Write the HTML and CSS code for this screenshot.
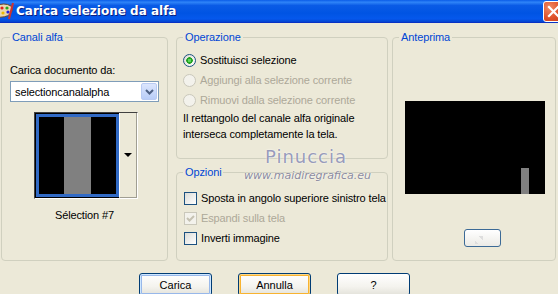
FILE: index.html
```html
<!DOCTYPE html>
<html lang="it">

<head>
    <meta charset="UTF-8">
    <title>Carica selezione da alfa</title>
    <link rel="stylesheet" href="styles.css">
</head>

<body>
    <div class="window">
        <div class="titlebar">
            <svg class="appIcon" width="14" height="18" viewBox="0 0 14 18">
                <path d="M-4 4 Q4 0 11 4 Q14 8 10 12 Q6 16 -4 15 Z" fill="#e9d7b0" stroke="#6b4a2a" stroke-width="1"/>
                <circle cx="2" cy="6" r="1.6" fill="#d22"/>
                <circle cx="7" cy="6" r="1.6" fill="#2a2"/>
                <circle cx="8" cy="10" r="1.6" fill="#22d"/>
                <circle cx="3" cy="11" r="1.6" fill="#eb0"/>
                <path d="M9 17 L13 1" stroke="#c33" stroke-width="2"/>
            </svg>
            <span class="title">Carica selezione da alfa</span>
            <span class="closeBtn">
                <svg width="21" height="21" viewBox="0 0 21 21">
                    <path d="M6 6 L15 15 M15 6 L6 15" stroke="#fff" stroke-width="2.2" stroke-linecap="square"/>
                </svg>
            </span>
        </div>

        <div class="dialog">
            <div class="groups">
                <fieldset class="group channels">
                    <legend>Canali alfa</legend>
                    <div class="fieldLabel">Carica documento da:</div>
                    <div class="combo">
                        <span class="comboText">selectioncanalalpha</span>
                        <span class="comboBtn">
                            <svg width="9" height="6" viewBox="0 0 9 6">
                                <path d="M1 1 L4.5 4.5 L8 1" stroke="#4d6185" stroke-width="2" fill="none"/>
                            </svg>
                        </span>
                    </div>
                    <div class="thumbPicker">
                        <div class="thumb"><div class="thumbImage"></div></div>
                        <div class="thumbDrop"><span class="arrowDown"></span></div>
                    </div>
                    <div class="thumbCaption">Sélection #7</div>
                </fieldset>

                <div class="middle">
                    <fieldset class="group operation">
                        <legend>Operazione</legend>
                        <div class="option"><span class="radio checked"></span>Sostituisci selezione</div>
                        <div class="option disabled"><span class="radio"></span>Aggiungi alla selezione corrente</div>
                        <div class="option disabled"><span class="radio"></span>Rimuovi dalla selezione corrente</div>
                        <p class="note">Il rettangolo del canale alfa originale<br>interseca completamente la tela.</p>
                    </fieldset>
                    <fieldset class="group options">
                        <legend>Opzioni</legend>
                        <div class="option"><span class="check"></span>Sposta in angolo superiore sinistro tela</div>
                        <div class="option disabled"><span class="check">
                            <svg width="11" height="11" viewBox="0 0 11 11">
                                <path d="M2 5 L4.5 7.5 L9 3" stroke="#c5c2b2" stroke-width="2" fill="none"/>
                            </svg>
                        </span>Espandi sulla tela</div>
                        <div class="option"><span class="check"></span>Inverti immagine</div>
                    </fieldset>
                </div>

                <fieldset class="group preview">
                    <legend>Anteprima</legend>
                    <div class="previewImage"><span class="previewBar"></span></div>
                    <button class="previewBtn"></button>
                </fieldset>
            </div>

            <div class="actions">
                <button class="btn default">Carica</button>
                <button class="btn hover">Annulla</button>
                <button class="btn">?</button>
            </div>
        </div>

        <div class="watermark">
            <div class="wmName">Pinuccia</div>
            <div class="wmSite">www.maidiregrafica.eu</div>
        </div>
    </div>
</body>

</html>
```

FILE: styles.css
```css
body {
    margin: 0;
    background-color: #ece9d8;
    font-family: "Liberation Sans", Arial, sans-serif;
    font-size: 11px;
    letter-spacing: -0.12px;
    color: #000;
}

.window {
    position: relative;
    width: 558px;
    height: 294px;
    overflow: hidden;
    background-color: #ece9d8;
}

.titlebar {
    display: flex;
    align-items: center;
    height: 22px;
    border-bottom: 1px solid #0831c4;
    background: linear-gradient(#0a5ce8 0%, #2f84f8 10%, #0a5be6 25%, #0054e3 60%, #0558ec 85%, #0444cf 100%);
}

.appIcon {
    flex: none;
    margin: 0 2px 0 0;
}

.title {
    flex: 1;
    color: #fff;
    font-family: "DejaVu Sans", sans-serif;
    font-weight: bold;
    font-size: 12px;
    letter-spacing: 0;
    text-shadow: 1px 1px 0 #0a1e80;
}

.closeBtn {
    flex: none;
    width: 21px;
    height: 21px;
    margin: 0 -6px 0 0;
    box-sizing: border-box;
    border: 1px solid #fff;
    border-radius: 3px;
    background: radial-gradient(circle at 30% 30%, #f08a66 0%, #e0522a 55%, #c43c1a 100%);
}

.closeBtn svg {
    display: block;
    margin: -1px;
}

.dialog {
    padding: 8px 2px 0 1px;
}

.groups {
    display: flex;
    height: 230px;
}

.group {
    box-sizing: border-box;
    margin: 0;
    min-width: 0;
    padding: 0 6px;
    border: 1px solid #d0d0bf;
    border-radius: 4px;
}

.group legend {
    padding: 0 2px;
    line-height: 13px;
    color: #0046d5;
}

.channels {
    width: 167px;
    padding: 0 8px;
}

.middle {
    display: flex;
    flex-direction: column;
    width: 212px;
    margin-left: 8px;
}

.operation {
    height: 128px;
}

.options {
    flex: 1;
    margin-top: 7px;
}

.preview {
    width: 164px;
    margin-left: 4px;
}

.fieldLabel {
    margin-top: 20px;
    line-height: 13px;
}

.combo {
    display: flex;
    align-items: center;
    box-sizing: border-box;
    width: 149px;
    height: 21px;
    margin-top: 4px;
    border: 1px solid #7f9db9;
    background-color: #fff;
}

.comboText {
    flex: 1;
    padding-left: 4px;
}

.comboBtn {
    display: flex;
    align-items: center;
    justify-content: center;
    box-sizing: border-box;
    width: 16px;
    height: 17px;
    margin-right: 1px;
    border: 1px solid #b9cbf3;
    border-radius: 2px;
    background: linear-gradient(#dce6fd, #b8cdf8);
}

.thumbPicker {
    display: flex;
    box-sizing: border-box;
    width: 104px;
    height: 87px;
    margin: 10px 0 0 24px;
    border: 1px solid;
    border-color: #404040 #fff #fff #404040;
    background-color: #ece9d8;
}

.thumb {
    box-sizing: border-box;
    width: 84px;
    height: 85px;
    border: 1px solid #000;
    border-right: none;
}

.thumbImage {
    height: 100%;
    box-sizing: border-box;
    border: 3px solid #316ac5;
    background: linear-gradient(to right, #000 0 25px, #808080 25px 52px, #000 52px);
}

.thumbDrop {
    display: flex;
    align-items: center;
    justify-content: center;
    flex: 1;
    border-left: 1px solid #fff;
    border-right: 1px solid #a09e92;
    border-bottom: 1px solid #a09e92;
}

.arrowDown {
    border-left: 4px solid transparent;
    border-right: 4px solid transparent;
    border-top: 4px solid #000;
}

.thumbCaption {
    margin-top: 10px;
    text-align: center;
    line-height: 13px;
}

.option {
    display: flex;
    align-items: center;
    height: 20px;
    line-height: 13px;
    white-space: nowrap;
}

.option.disabled {
    color: #aca899;
}

.operation .option:first-of-type {
    margin-top: 6px;
}

.options .option:first-of-type {
    margin-top: 9px;
}

.radio {
    flex: none;
    box-sizing: border-box;
    width: 13px;
    height: 13px;
    margin-right: 4px;
    border: 1px solid #1c5180;
    border-radius: 50%;
    background: linear-gradient(135deg, #dcdbd3, #fff);
}

.radio.checked {
    background: radial-gradient(circle, #5cd65c 0 1.5px, #21a121 2px 3px, transparent 3.5px), linear-gradient(135deg, #dcdbd3, #fff);
}

.disabled .radio {
    border-color: #cac8bb;
    background: #f3f2ec;
}

.check {
    flex: none;
    display: flex;
    align-items: center;
    justify-content: center;
    box-sizing: border-box;
    width: 13px;
    height: 13px;
    margin: 0 4px 0 1px;
    border: 1px solid #1c5180;
    background: linear-gradient(135deg, #dcdcd7, #fff);
}

.disabled .check {
    border-color: #cac8bb;
    background: #f3f2ec;
}

.note {
    margin: 0;
    line-height: 16px;
    white-space: nowrap;
}

.previewImage {
    position: relative;
    width: 140px;
    height: 93px;
    margin: 57px 0 0 6px;
    background-color: #000;
}

.previewBar {
    position: absolute;
    left: 116px;
    bottom: 0;
    width: 8px;
    height: 26px;
    background-color: #808080;
}

.previewBtn {
    display: block;
    width: 37px;
    height: 18px;
    margin: 35px 0 0 65px;
    border: 1px solid #3c6a96;
    border-radius: 3px;
    background:
        linear-gradient(45deg, #dedede 25%, transparent 25% 75%, #dedede 75%) 10px 6px / 8px 8px no-repeat,
        linear-gradient(#fff, #ecebe6);
}

.actions {
    display: flex;
    margin: 12px 0 0 138px;
    gap: 26px;
}

.btn {
    width: 73px;
    height: 23px;
    padding: 0;
    border: 1px solid #003c74;
    border-radius: 3px;
    background: linear-gradient(#fff 0%, #f4f3ee 60%, #e3e2da 100%);
    font-family: "Liberation Sans", Arial, sans-serif;
    font-size: 11px;
    color: #000;
}

.btn.default {
    box-shadow: inset 0 0 0 1px #cee7ff, inset 0 0 0 2px #98b8ea;
}

.btn.hover {
    box-shadow: inset 0 0 0 1px #fdd889, inset 0 0 0 2px #f8b330;
}

.watermark {
    position: absolute;
    left: 244px;
    top: 147px;
    width: 124px;
    text-align: center;
    pointer-events: none;
}

.wmName {
    font-family: "DejaVu Sans", sans-serif;
    font-size: 18px;
    letter-spacing: 1px;
    line-height: 20px;
    color: rgba(120, 125, 170, 0.75);
    text-shadow: 0 0 2px #fff;
}

.wmSite {
    margin-top: 3px;
    font-family: "DejaVu Sans", sans-serif;
    font-style: italic;
    font-size: 11px;
    letter-spacing: 0;
    line-height: 12px;
    color: rgba(110, 110, 140, 0.8);
    text-shadow: 0 0 2px #fff;
}
```
